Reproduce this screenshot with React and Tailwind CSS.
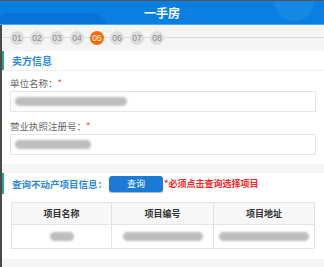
import React from "react";

const steps = ["01", "02", "03", "04", "05", "06", "07", "08"];

const Blur = ({ w, className = "" }) => (
  <div
    className={`h-[9px] rounded-full bg-[#bdbdbd] blur-[1.2px] ${className}`}
    style={{ width: w }}
  />
);

const SectionTitle = ({ children }) => (
  <div className="flex h-[19px] items-center border-l-2 border-[#1aa88a] pl-[8px] text-[10px] font-bold text-[#2a8ad8]">
    {children}
  </div>
);

export default function App() {
  return (
    <div
      className="h-[267px] w-[324px] overflow-hidden border-t border-[#555] bg-[#f5f5f5]"
      style={{ fontFamily: '"Noto Sans CJK SC", "Noto Sans", sans-serif' }}
    >
      <div className="relative flex h-[24px] items-center justify-center overflow-hidden border-b border-[#4aa6ee] bg-[#0a7fe2]">
        <div className="absolute -left-[10px] top-[12px] h-[40px] w-[120px] rounded-full bg-[#0873d6]" />
        <div className="absolute right-[10px] -top-[20px] h-[40px] w-[40px] rounded-full bg-[#1688e6]" />
        <span className="relative text-[12px] font-bold text-white">一手房</span>
      </div>

      <div className="flex h-full flex-col border-l-2 border-[#4a4a4a]">
        <div className="relative flex h-[26px] items-center gap-[6px] pl-[8px]">
          <div className="absolute left-0 right-0 top-[12px] h-px bg-[#dcdcdc]" />
          {steps.map((s) => (
            <div
              key={s}
              className={`relative flex h-[14px] w-[14px] items-center justify-center rounded-full text-[8.5px] ${
                s === "05" ? "bg-[#f66a06] text-white" : "bg-[#dedede] text-[#8a8a8a]"
              }`}
              style={{ fontFamily: '"Liberation Sans", sans-serif' }}
            >
              {s}
            </div>
          ))}
        </div>

        <div className="bg-white">
          <SectionTitle>卖方信息</SectionTitle>
          <div className="border-t border-[#efefef] px-[8px] pb-[9px]">
            <div className="mt-[5px] text-[9.5px] leading-[14px] text-[#666]">
              单位名称：<span className="text-[#f33]">*</span>
            </div>
            <div className="mt-[1px] flex h-[21px] items-center border border-[#e6e6e6] px-[4px]">
              <Blur w={112} />
            </div>
            <div className="mt-[7px] text-[9.5px] leading-[14px] text-[#666]">
              营业执照注册号：<span className="text-[#f33]">*</span>
            </div>
            <div className="mt-[1px] flex h-[21px] items-center border border-[#e6e6e6] px-[4px]">
              <Blur w={76} />
            </div>
          </div>
        </div>

        <div className="mt-[9px] bg-white pb-[10px]">
          <div className="flex h-[21px] items-center border-l-2 border-[#1aa88a] pl-[8px] pt-[1px]">
            <span className="text-[9.5px] font-bold text-[#2a8ad8]">查询不动产项目信息：</span>
            <button className="ml-[2px] flex h-[16px] w-[54px] items-center justify-center rounded-[3px] bg-[#1a7ad6] text-[9px] text-white shadow-[0_1px_1px_rgba(0,0,0,0.3)]">
              查询
            </button>
            <span className="ml-[1px] text-[9px] font-bold text-[#f22]">*必须点击查询选择项目</span>
          </div>
          <div className="mx-[9px] mt-[8px] border border-[#e3e3e3]">
            <div className="grid h-[21px] grid-cols-[100px_102px_1fr] bg-[#f7f7f7] text-[9px] font-bold text-[#333]">
              <div className="flex items-center justify-center border-r border-[#e3e3e3]">项目名称</div>
              <div className="flex items-center justify-center border-r border-[#e3e3e3]">项目编号</div>
              <div className="flex items-center justify-center">项目地址</div>
            </div>
            <div className="grid h-[24px] grid-cols-[100px_102px_1fr] border-t border-[#e3e3e3] bg-white">
              <div className="flex items-center justify-center border-r border-[#e3e3e3]">
                <Blur w={24} />
              </div>
              <div className="flex items-center justify-center border-r border-[#e3e3e3]">
                <Blur w={80} />
              </div>
              <div className="flex items-center justify-center">
                <Blur w={90} />
              </div>
            </div>
          </div>
        </div>
      </div>
    </div>
  );
}
